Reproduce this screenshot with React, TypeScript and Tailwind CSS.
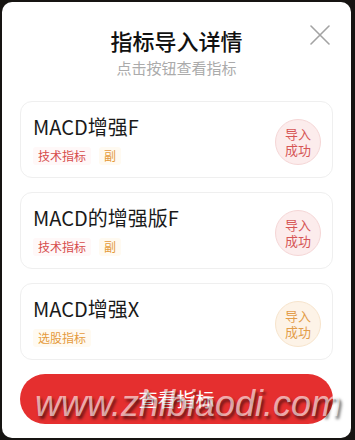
import React from "react";

type Item = {
  name: string;
  tags: { label: string; tone: "red" | "orange" }[];
  tone: "red" | "orange";
};

const items: Item[] = [
  { name: "MACD增强F", tags: [{ label: "技术指标", tone: "red" }, { label: "副", tone: "orange" }], tone: "red" },
  { name: "MACD的增强版F", tags: [{ label: "技术指标", tone: "red" }, { label: "副", tone: "orange" }], tone: "red" },
  { name: "MACD增强X", tags: [{ label: "选股指标", tone: "orange" }], tone: "orange" },
];

function Tag({ label, tone }: { label: string; tone: "red" | "orange" }) {
  return (
    <span
      className={
        tone === "red"
          ? "px-[5px] h-[18px] leading-[18px] text-[12px] rounded-[3px] bg-[#fff8f8] text-[#d64b4b]"
          : "px-[5px] h-[18px] leading-[18px] text-[12px] rounded-[3px] bg-[#fffaf1] text-[#e59a3c]"
      }
    >
      {label}
    </span>
  );
}

function Card({ item }: { item: Item }) {
  return (
    <div className="h-[77px] shrink-0 rounded-[12px] border border-[#efefef] flex items-center pl-[12px] pr-[11px]">
      <div className="flex-1 flex flex-col pt-[1px]">
        <div className="text-[20px] leading-[24px] text-[#1a1a1a]">{item.name}</div>
        <div className="mt-[8px] flex gap-[8px]">
          {item.tags.map((t, i) => (
            <Tag key={i} label={t.label} tone={t.tone} />
          ))}
        </div>
      </div>
      <div
        className={
          item.tone === "red"
            ? "mt-[4px] w-[46px] h-[46px] rounded-full border border-[#f5d6d6] bg-[#fcecec] text-[#d65656] flex items-center justify-center text-center text-[13px] leading-[16px]"
            : "mt-[4px] w-[46px] h-[46px] rounded-full border border-[#f7e4cc] bg-[#fdf3e7] text-[#e39d4a] flex items-center justify-center text-center text-[13px] leading-[16px]"
        }
      >
        <span>
          导入
          <br />
          成功
        </span>
      </div>
    </div>
  );
}

export default function App() {
  return (
    <div
      className="w-[355px] h-[440px] bg-[#161412] pt-[2px] pl-[2px] pr-[4px] pb-[2px]"
      style={{ fontFamily: '"Noto Sans CJK SC", "Noto Sans", sans-serif' }}
    >
      <div className="relative h-full bg-white rounded-[10px] flex flex-col px-[18px] pt-[24px] overflow-hidden">
        <svg className="absolute right-[21px] top-[23px]" width="20" height="20" viewBox="0 0 20 20">
          <path d="M1 1 L19 19 M19 1 L1 19" stroke="#a3a3a3" strokeWidth="1.6" strokeLinecap="round" />
        </svg>
        <div className="text-center text-[22px] leading-[28px] font-medium text-[#111]">指标导入详情</div>
        <div className="mt-[4px] text-center text-[15px] leading-[20px] text-[#ababab]">点击按钮查看指标</div>
        <div className="mt-[23px] flex flex-col gap-[14px]">
          {items.map((it, i) => (
            <Card key={i} item={it} />
          ))}
        </div>
        <button className="mt-[14px] h-[50px] rounded-full bg-[#e52f2f] text-white text-[19px] flex items-center justify-center">
          查看指标
        </button>
        <div
          className="absolute left-[33px] top-[380px] text-[36px] italic leading-[44px] text-[rgba(255,255,255,0.62)] whitespace-nowrap"
          style={{ fontFamily: '"Liberation Sans", Arial, sans-serif', textShadow: "2px 3px 3px rgba(0,0,0,0.55)" }}
        >
          www.zhibiaodi.com
        </div>
      </div>
    </div>
  );
}
